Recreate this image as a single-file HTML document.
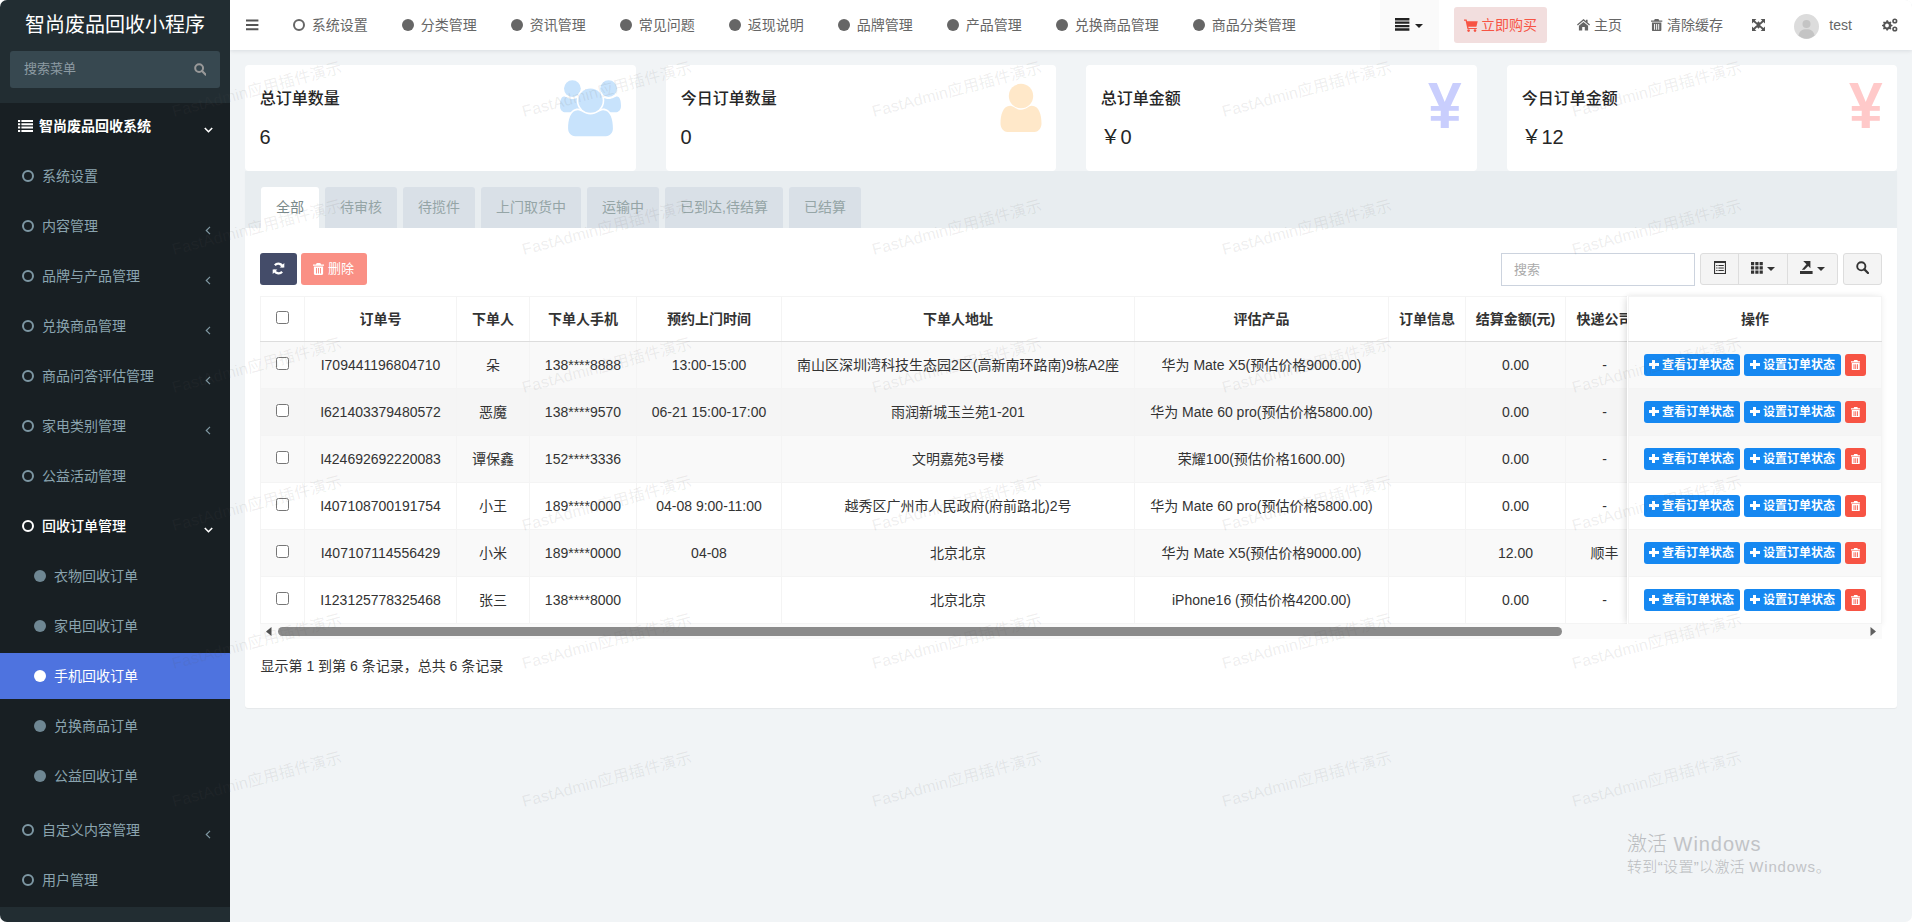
<!DOCTYPE html>
<html lang="zh-CN">
<head>
<meta charset="utf-8">
<title>智尚废品回收小程序</title>
<style>
*{box-sizing:border-box}
html,body{margin:0;padding:0;background:#fff}
body{width:1912px;height:922px;overflow:hidden;font-family:"Liberation Sans","Noto Sans CJK SC",sans-serif;font-size:14px;color:#333;line-height:20px}
a{text-decoration:none;color:inherit}
ul{list-style:none;margin:0;padding:0}
#wrap{position:absolute;left:0;top:0;width:1912px;height:922px;overflow:hidden;background:#f1f4f6;border-radius:7px}
.abs{position:absolute}
/* ---------- sidebar ---------- */
#side{position:absolute;left:0;top:0;width:230px;height:922px;background:#222d32}
#logo{position:absolute;left:0;top:0;width:230px;height:50px;line-height:50px;text-align:center;color:#fff;font-size:20px;font-weight:400}
#sform{position:absolute;left:10px;top:51px;width:210px;height:37px;background:#374850;border-radius:3px}
#sform span{position:absolute;left:14px;top:0;line-height:36px;font-size:13px;color:#8d9ba3}
#sform svg{position:absolute;left:183.500px;top:11.800px}
#menu{position:absolute;left:0;top:103px;width:230px;height:804px;background:#181f23}
#menu a{position:absolute;left:0;width:230px;height:46px;line-height:46px;color:#8aa4af;font-size:14px;white-space:nowrap}
#menu a.on{color:#fff}
#menu a.cur{background:#4e73df;color:#fff}
#menu a.top{font-weight:bold;color:#fff}
#menu i.o{position:absolute;left:22px;top:17px;width:12px;height:12px;border:2px solid #7d97a3;border-radius:50%}
#menu a.on i.o{border-color:#fff}
#menu i.d{position:absolute;left:34px;top:17px;width:12px;height:12px;background:#6f8793;border-radius:50%}
#menu a.cur i.d{background:#fff}
#menu a b{position:absolute;left:42px;top:0;font-weight:normal}
#menu a.l3 b{left:54px}
#menu a.top b{left:39px;font-weight:bold}
#menu a.on b{font-weight:500}
#menu svg.ch{position:absolute;left:204px;top:24px}
/* ---------- header ---------- */
#head{position:absolute;left:230px;top:0;width:1682px;height:50px;background:#fff;box-shadow:0 1px 4px rgba(0,21,41,.10)}
#head .nv{position:absolute;top:0;height:50px;line-height:50px;color:#666;font-size:14px;white-space:nowrap}
#head .nv i{position:absolute;left:0;top:19px;width:12px;height:12px;border-radius:50%;background:#666}
#head .nv i.o{background:none;border:2px solid #666}
#head .nv span{position:absolute;left:18.800px;top:0}
#head .rt{position:absolute;top:0;height:50px;line-height:50px;color:#666;font-size:14px;white-space:nowrap}
/* ---------- cards ---------- */
.card{position:absolute;top:65px;width:391px;height:106px;background:#fff;border-radius:4px}
.card h4{position:absolute;left:14.7px;top:23px;margin:0;font-size:16px;line-height:22px;font-weight:500;color:#262626;font-family:"Liberation Sans","Noto Sans CJK SC",sans-serif}
.card em{position:absolute;left:14.500px;top:58px;font-style:normal;font-size:20px;line-height:28px;color:#262626}
.card svg{position:absolute}
/* ---------- panel ---------- */
#panel{position:absolute;left:245px;top:171px;width:1652px;height:537px;background:#fff;border-radius:0 0 3px 3px;box-shadow:0 1px 1px rgba(0,0,0,.05)}
#tabs{position:absolute;left:0;top:0;width:1652px;height:57px;background:#e8edf0}
#tabs a{position:absolute;top:16px;height:41px;line-height:41px;text-align:center;background:#d9e0e7;color:#95a5a6;font-size:14px;border-radius:3px 3px 0 0}
#tabs a.on{background:#fff;color:#7b8a8b}
.btn{position:absolute;border-radius:3px}
/* ---------- table ---------- */
#tw{position:absolute;left:15px;top:125px;width:1622px;height:328px;overflow:hidden}
table{border-collapse:collapse;table-layout:fixed;font-size:14px}
th,td{border:1px solid #f4f4f4;text-align:center;padding:0;white-space:nowrap;overflow:hidden;color:#333}
th{height:45px;font-weight:bold;border-bottom:1px solid #ddd;background:#fff;color:#333}
td{height:47px}
tbody tr:nth-child(odd) td{background:#f9f9f9}
tbody tr:nth-child(even) td{background:#fff}
tbody tr.hv td{background:#f5f5f5}
.cb{display:inline-block;width:13px;height:13px;border:1px solid #767676;border-radius:2.5px;background:#fff;vertical-align:middle;position:relative;top:-3px}
#fx{position:absolute;left:1382px;top:125px;width:255px;height:328.5px;background:#fff;box-shadow:-4px 0 8px -3px rgba(0,0,0,.11),0 0 6px rgba(0,0,0,.07)}
#fx table{width:254px;margin-left:1px}
.ob{display:inline-block;width:96px;text-align:left;height:22px;line-height:22px;border-radius:3px;color:#fff;font-size:12px;font-weight:bold;padding:0 0 0 5px;vertical-align:middle;background:#1688f1;margin-right:4px;position:relative;top:-0.5px}
.ob.b2{width:97px;padding-left:6px}
.ob.r{background:#f75444;width:21px;padding:0;margin-right:0;text-align:center}
.ob i{display:inline-block;width:9.5px;height:10px;position:relative;margin-right:3.600px;top:1px}
.ob i:before{content:"";position:absolute;left:0;top:3.5px;width:9.5px;height:3px;background:#fff}
.ob i:after{content:"";position:absolute;left:3.25px;top:0.25px;width:3px;height:9.5px;background:#fff}
/* ---------- watermark ---------- */
#wm{position:absolute;left:0;top:0;width:1912px;height:922px;overflow:hidden;pointer-events:none}
#wm span{position:absolute;font-size:16px;line-height:16px;color:rgba(90,90,90,.10);letter-spacing:.15px;white-space:nowrap;transform-origin:0 13.5px;transform:rotate(-14.8deg)}
#win{position:absolute;left:1627px;top:830.5px;color:#bbbdc0;font-weight:300;white-space:nowrap}
#win div:first-child{font-size:20px;line-height:26px}
#win div:last-child{font-size:15px;line-height:20px;margin-top:0}
</style>
</head>
<body>
<div id="wrap">

<!-- ================= HEADER ================= -->
<div id="head">
  <svg class="abs" style="left:16px;top:19px" width="13" height="12" viewBox="0 0 13 12"><path d="M0 .5h12.4v2H0zM0 4.9h12.4v2H0zM0 9.3h12.4v2H0z" fill="#555"/></svg>
  <a class="nv" style="left:63px;width:80px"><i class="o"></i><span>系统设置</span></a>
  <a class="nv" style="left:172px;width:80px"><i></i><span>分类管理</span></a>
  <a class="nv" style="left:281px;width:80px"><i></i><span>资讯管理</span></a>
  <a class="nv" style="left:390px;width:80px"><i></i><span>常见问题</span></a>
  <a class="nv" style="left:499px;width:80px"><i></i><span>返现说明</span></a>
  <a class="nv" style="left:608px;width:80px"><i></i><span>品牌管理</span></a>
  <a class="nv" style="left:717px;width:80px"><i></i><span>产品管理</span></a>
  <a class="nv" style="left:826px;width:108px"><i></i><span>兑换商品管理</span></a>
  <a class="nv" style="left:963px;width:108px"><i></i><span>商品分类管理</span></a>

  <div class="abs" style="left:1150px;top:0;width:59px;height:50px;background:#fafafa"></div>
  <svg class="abs" style="left:1164.6px;top:18.2px" width="15" height="13" viewBox="0 0 15 13"><path d="M0 0h14.4v2.4H0zM0 3.45h14.4v2.4H0zM0 6.9h14.4v2.4H0zM0 10.35h14.4v2.4H0z" fill="#222"/></svg>
  <svg class="abs" style="left:1185px;top:23.5px" width="8" height="4" viewBox="0 0 8 4"><path d="M0 0h8L4 4z" fill="#222"/></svg>

  <div class="abs" style="left:1224px;top:7px;width:93px;height:36px;background:#f2dede;border-radius:3px"></div>
  <svg class="abs" style="left:1233.5px;top:18.5px" width="14" height="13" viewBox="0 0 14 13"><path d="M0 .6h2.6l.5 1.6h10.6l-1.3 5.6H4.3l.3 1.1h8.2v1.1H3.4L1.6 1.7H0z" fill="#f75444"/><circle cx="4.6" cy="11.6" r="1.3" fill="#f75444"/><circle cx="11" cy="11.6" r="1.3" fill="#f75444"/></svg>
  <span class="rt" style="left:1251px;color:#f75444">立即购买</span>

  <svg class="abs" style="left:1347px;top:19px" width="13" height="12" viewBox="0 0 13 12"><path d="M6.5 0L0 5.6l.8.9 5.7-4.8 5.7 4.8.8-.9L10.6 3.500V.8H9v1.300z" fill="#666"/><path d="M6.500 2.900L1.900 6.800V11.500h3.300V8h2.600v3.500h3.300V6.800z" fill="#666"/></svg>
  <span class="rt" style="left:1364px">主页</span>

  <svg class="abs" style="left:1421.300px;top:18.800px" width="11.300" height="12.300" viewBox="0 0 11 12"><path d="M3.700 0h3.600l.7 1.400H11v1.400H0V1.400h3zM.9 3.400h9.200v7.400c0 .7-.5 1.200-1.200 1.200H2.100c-.7 0-1.200-.5-1.200-1.200zM3 4.900v5.500h.95V4.900zM5.030 4.900v5.500h.95V4.900zM7.050 4.900v5.500H8V4.900z" fill="#666" fill-rule="evenodd"/></svg>
  <span class="rt" style="left:1437px">清除缓存</span>

  <svg class="abs" style="left:1522px;top:19px" width="13" height="12" viewBox="0 0 13 12"><path d="M0 0h4.400L2.900 1.500l2.200 2.200 1.400-1.400 1.400 1.400L10.100 1.500 8.600 0H13v4.400l-1.500-1.500-2.200 2.200L8 6l1.300 1.300 2.200 1.800L13 7.600V12H8.600l1.500-1.500-2.200-2.200L6.500 9.700 5.100 8.300 2.900 10.500 4.400 12H0V7.600l1.500 1.500 2.200-2.200L5 6 3.700 4.700 1.500 2.900 0 4.400z" fill="#555"/></svg>

  <svg class="abs" style="left:1563.500px;top:13.500px" width="25" height="25" viewBox="0 0 25 25"><circle cx="12.500" cy="12.500" r="12.500" fill="#dcdcdc"/><circle cx="12.500" cy="10" r="4" fill="#c4c4c4"/><path d="M4.500 21.500c.8-4.500 3.500-6.300 8-6.300s7.200 1.800 8 6.300c-2.200 2-5 3.200-8 3.200s-5.800-1.200-8-3.200z" fill="#c4c4c4"/></svg>
  <span class="rt" style="left:1599.3px">test</span>

  <svg class="abs" style="left:1651.500px;top:18px" width="16" height="14" viewBox="0 0 16 14"><g fill="#555"><path d="M5 2.200l1 .1.400 1.300 1 .500 1.200-.6.800.8-.6 1.200.4 1 1.300.4v1.200l-1.300.4-.4 1 .6 1.200-.8.8-1.200-.6-1 .4-.4 1.300H4.400L4 11.300l-1-.4-1.200.6-.8-.8.600-1.200-.4-1L0 8.100V6.900l1.300-.4.400-1-.6-1.200.8-.8 1.200.6 1-.5.400-1.300zM5 5.600a1.900 1.900 0 100 3.800 1.900 1.900 0 000-3.800z" fill-rule="evenodd"/><circle cx="12.800" cy="3" r="2.600"/><circle cx="12.800" cy="11" r="2.600"/></g><circle cx="12.800" cy="3" r="1" fill="#fff"/><circle cx="12.800" cy="11" r="1" fill="#fff"/></svg>
</div>

<!-- ================= SIDEBAR ================= -->
<div id="side">
  <div id="logo">智尚废品回收小程序</div>
  <div id="sform"><span>搜索菜单</span>
    <svg width="12.800" height="12.800" viewBox="0 0 14 14"><circle cx="5.600" cy="5.600" r="4.300" fill="none" stroke="#999" stroke-width="2.200"/><path d="M8.800 8.800l4 4" stroke="#999" stroke-width="2.300" stroke-linecap="round"/></svg>
  </div>
  <div id="menu">
    <a class="top" style="top:0">
      <svg class="abs" style="left:18px;top:17px" width="15" height="12" viewBox="0 0 15 12"><path d="M0 0h2.200v2H0zM3.400 0H15v2H3.400zM0 3.300h2.200v2H0zM3.400 3.300H15v2H3.400zM0 6.600h2.200v2H0zM3.400 6.600H15v2H3.400zM0 9.900h2.200v2H0zM3.400 9.900H15v2H3.400z" fill="#fff"/></svg>
      <b>智尚废品回收系统</b>
      <svg class="ch" width="9" height="6" viewBox="0 0 9 6"><path d="M.8 1l3.700 3.700L8.200 1" fill="none" stroke="#fff" stroke-width="1.600"/></svg>
    </a>
    <a style="top:50px"><i class="o"></i><b>系统设置</b></a>
    <a style="top:100px"><i class="o"></i><b>内容管理</b><svg class="ch" style="left:205px;top:23px" width="6" height="9" viewBox="0 0 6 9"><path d="M5 .8L1.300 4.500 5 8.200" fill="none" stroke="#7f98a3" stroke-width="1.200"/></svg></a>
    <a style="top:150px"><i class="o"></i><b>品牌与产品管理</b><svg class="ch" style="left:205px;top:23px" width="6" height="9" viewBox="0 0 6 9"><path d="M5 .8L1.300 4.500 5 8.200" fill="none" stroke="#7f98a3" stroke-width="1.200"/></svg></a>
    <a style="top:200px"><i class="o"></i><b>兑换商品管理</b><svg class="ch" style="left:205px;top:23px" width="6" height="9" viewBox="0 0 6 9"><path d="M5 .8L1.300 4.500 5 8.200" fill="none" stroke="#7f98a3" stroke-width="1.200"/></svg></a>
    <a style="top:250px"><i class="o"></i><b>商品问答评估管理</b><svg class="ch" style="left:205px;top:23px" width="6" height="9" viewBox="0 0 6 9"><path d="M5 .8L1.300 4.500 5 8.200" fill="none" stroke="#7f98a3" stroke-width="1.200"/></svg></a>
    <a style="top:300px"><i class="o"></i><b>家电类别管理</b><svg class="ch" style="left:205px;top:23px" width="6" height="9" viewBox="0 0 6 9"><path d="M5 .8L1.300 4.500 5 8.200" fill="none" stroke="#7f98a3" stroke-width="1.200"/></svg></a>
    <a style="top:350px"><i class="o"></i><b>公益活动管理</b></a>
    <a class="on" style="top:400px"><i class="o"></i><b>回收订单管理</b><svg class="ch" width="9" height="6" viewBox="0 0 9 6"><path d="M.8 1l3.700 3.700L8.200 1" fill="none" stroke="#fff" stroke-width="1.600"/></svg></a>
    <a class="l3" style="top:450px"><i class="d"></i><b>衣物回收订单</b></a>
    <a class="l3" style="top:500px"><i class="d"></i><b>家电回收订单</b></a>
    <a class="l3 cur" style="top:550px"><i class="d"></i><b>手机回收订单</b></a>
    <a class="l3" style="top:600px"><i class="d"></i><b>兑换商品订单</b></a>
    <a class="l3" style="top:650px"><i class="d"></i><b>公益回收订单</b></a>
    <a style="top:704px"><i class="o"></i><b>自定义内容管理</b><svg class="ch" style="left:205px;top:23px" width="6" height="9" viewBox="0 0 6 9"><path d="M5 .8L1.300 4.500 5 8.200" fill="none" stroke="#7f98a3" stroke-width="1.200"/></svg></a>
    <a style="top:754px"><i class="o"></i><b>用户管理</b></a>
  </div>
</div>

<!-- ================= CARDS ================= -->
<div class="card" style="left:245px"><h4>总订单数量</h4><em>6</em>
  <svg style="left:315px;top:14.600px" width="62" height="57" viewBox="0 0 62 57">
    <g fill="#c8e3fc">
      <circle cx="12.400" cy="8.600" r="8.400"/><circle cx="48.600" cy="8.600" r="8.400"/>
      <path d="M0 26c0-5 1-9.500 4-9.500 2 0 4 2.500 8.400 2.500s6.400-2.500 8.400-2.500c1.500 0 2.500 1 3.200 2.500V32.300H5.500C2.500 32.300 0 30 0 26z"/>
      <path d="M61 26c0-5-1-9.500-4-9.500-2 0-4 2.500-8.400 2.500s-6.400-2.500-8.400-2.500c-1.500 0-2.500 1-3.200 2.500V32.300h18.500c3 0 5.500-2.300 5.500-6.300z"/>
    </g>
    <circle cx="30.500" cy="20.600" r="13.800" fill="#fff"/>
    <path d="M6.600 49c0-10 3-20.500 11.500-20.500 3.500 0 6 4.300 12.400 4.300s8.900-4.300 12.400-4.300C51.400 28.500 54.400 39 54.400 49c0 4.500-3 8.500-7.900 8.500h-32C9.600 57.500 6.600 53.500 6.600 49z" fill="#fff"/>
    <circle cx="30.500" cy="20.600" r="12.200" fill="#c8e3fc"/>
    <path d="M8.100 48.500c0-9 2.500-18.200 9.800-18.200 3.400 0 6.200 4.100 12.600 4.100s9.200-4.100 12.600-4.100c7.300 0 9.800 9.200 9.800 18.200 0 4-2.800 7.700-7 7.700H15.100c-4.200 0-7-3.700-7-7.700z" fill="#c8e3fc"/>
  </svg>
</div>
<div class="card" style="left:666px;width:390px"><h4>今日订单数量</h4><em>0</em>
  <svg style="left:334px;top:18px" width="42" height="50" viewBox="0 0 42 50">
    <circle cx="21" cy="13" r="12.200" fill="#ffe8c9"/>
    <path d="M.5 40.500C.5 32 3 22.800 10.200 22.800c3.200 0 5.400 3.900 10.800 3.900s7.600-3.900 10.800-3.900C39 22.800 41.500 32 41.500 40.500c0 4.200-2.700 8.400-7 8.400h-27c-4.300 0-7-4.200-7-8.400z" fill="#ffe8c9"/>
  </svg>
</div>
<div class="card" style="left:1086px"><h4>总订单金额</h4><em>￥0</em>
  <span class="abs" style="left:342.200px;top:9.300px;font-size:64.300px;line-height:64.300px;transform:scaleX(.94);transform-origin:0 0;font-weight:bold;color:#c9cefd;font-family:'Liberation Sans',sans-serif">¥</span>
</div>
<div class="card" style="left:1507px;width:390px"><h4>今日订单金额</h4><em>￥12</em>
  <span class="abs" style="left:342.200px;top:9.300px;font-size:64.300px;line-height:64.300px;transform:scaleX(.94);transform-origin:0 0;font-weight:bold;color:#ffc9c9;font-family:'Liberation Sans',sans-serif">¥</span>
</div>

<!-- ================= PANEL ================= -->
<div id="panel">
  <div id="tabs">
    <a class="on" style="left:16px;width:58px">全部</a>
    <a style="left:80px;width:72px">待审核</a>
    <a style="left:158px;width:72px">待揽件</a>
    <a style="left:236px;width:100px">上门取货中</a>
    <a style="left:342px;width:72px">运输中</a>
    <a style="left:420px;width:118px">已到达,待结算</a>
    <a style="left:544px;width:72px">已结算</a>
  </div>

  <!-- toolbar -->
  <div class="btn" style="left:15px;top:82px;width:37px;height:32px;background:#444c69"></div>
  <svg class="abs" style="left:27px;top:90.500px" width="13" height="13" viewBox="0 0 13 13"><path d="M10.900 5.200A4.600 4.600 0 002.900 3.300M2.100 7.800a4.600 4.600 0 008 1.900" fill="none" stroke="#fff" stroke-width="2.300"/><path d="M12.300 .9v4.700H7.600zM.7 12.100V7.400h4.700z" fill="#fff"/></svg>
  <div class="btn" style="left:56px;top:82px;width:66px;height:32px;background:#fa9085"></div>
  <svg class="abs" style="left:68.300px;top:91.700px" width="11" height="12" viewBox="0 0 11 12"><path d="M3.700 0h3.600l.7 1.400H11v1.400H0V1.400h3zM.9 3.400h9.200v7.400c0 .7-.5 1.200-1.200 1.200H2.100c-.7 0-1.200-.5-1.200-1.200zM3 4.900v5.500h.95V4.900zM5.030 4.900v5.500h.95V4.900zM7.050 4.900v5.500H8V4.900z" fill="#fff" fill-rule="evenodd"/></svg>
  <span class="abs" style="left:83px;top:82px;line-height:31px;font-size:13px;color:#fff">删除</span>

  <div class="abs" style="left:1256px;top:82px;width:194px;height:33px;border:1px solid #ccd3de;background:#fff;border-radius:0"></div>
  <span class="abs" style="left:1269px;top:82px;line-height:33px;font-size:13px;color:#aaa">搜索</span>

  <div class="btn" style="left:1455px;top:82px;width:138px;height:32px;background:#f4f4f4;border:1px solid #ddd"></div>
  <div class="abs" style="left:1493px;top:82px;width:1px;height:32px;background:#ddd"></div>
  <div class="abs" style="left:1542px;top:82px;width:1px;height:32px;background:#ddd"></div>
  <svg class="abs" style="left:1468.500px;top:89.500px" width="12" height="13" viewBox="0 0 12 13"><path d="M.5 1h11v11.500H.5z" fill="none" stroke="#333" stroke-width="1.200"/><path d="M0 0h12v2H0z" fill="#333"/><g transform="translate(0,1.300)"><path d="M2.200 2.800h1.300v1H2.200zM4.400 2.800h5.400v1H4.400zM2.200 5.200h1.300v1H2.200zM4.400 5.200h5.400v1H4.400zM2.200 7.600h1.300v1H2.200zM4.400 7.600h5.400v1H4.400z" fill="#333"/></g></svg>
  <svg class="abs" style="left:1506px;top:91px" width="12" height="12" viewBox="0 0 12 12"><path d="M0 0h3.200v3.200H0zM4.300 0h3.200v3.200H4.300zM8.600 0h3.200v3.200H8.600zM0 4.300h3.200v3.200H0zM4.300 4.300h3.200v3.200H4.300zM8.600 4.300h3.200v3.200H8.600zM0 8.600h3.200v3.200H0zM4.300 8.600h3.200v3.200H4.300zM8.600 8.600h3.200v3.200H8.600z" fill="#333"/></svg>
  <svg class="abs" style="left:1521.500px;top:96px" width="8" height="4" viewBox="0 0 8 4"><path d="M0 0h8L4 4z" fill="#333"/></svg>
  <svg class="abs" style="left:1555px;top:90px" width="13" height="13" viewBox="0 0 13 13"><path d="M0 10h12.600v3H0z" fill="#333"/><path d="M3.200 0h7.200v7.200L8.200 5 4.500 8.700 1.800 8.700 6.500 3.300z" fill="#333"/></svg>
  <svg class="abs" style="left:1571.500px;top:96px" width="8" height="4" viewBox="0 0 8 4"><path d="M0 0h8L4 4z" fill="#333"/></svg>

  <div class="btn" style="left:1598px;top:82px;width:39px;height:32px;background:#f4f4f4;border:1px solid #ddd"></div>
  <svg class="abs" style="left:1611px;top:90px" width="13" height="13" viewBox="0 0 13 13"><circle cx="5.300" cy="5.300" r="4.100" fill="none" stroke="#333" stroke-width="1.900"/><path d="M8.400 8.400l3.600 3.600" stroke="#333" stroke-width="2.200" stroke-linecap="round"/></svg>

  <!-- table -->
  <div id="tw">
  <table style="width:2003px">
    <colgroup><col style="width:44px"><col style="width:152px"><col style="width:73px"><col style="width:107px"><col style="width:145px"><col style="width:353px"><col style="width:254px"><col style="width:77px"><col style="width:100px"><col style="width:78px"><col style="width:159px"><col style="width:207px"><col style="width:254px"></colgroup>
    <thead><tr><th><i class="cb"></i></th><th>订单号</th><th>下单人</th><th>下单人手机</th><th>预约上门时间</th><th>下单人地址</th><th>评估产品</th><th>订单信息</th><th>结算金额(元)</th><th>快递公司</th><th>快递单号</th><th>下单时间</th><th>操作</th></tr></thead>
    <tbody>
      <tr><td><i class="cb"></i></td><td>I709441196804710</td><td>朵</td><td>138****8888</td><td>13:00-15:00</td><td>南山区深圳湾科技生态园2区(高新南环路南)9栋A2座</td><td>华为 Mate X5(预估价格9000.00)</td><td></td><td>0.00</td><td>-</td><td>-</td><td></td><td></td></tr>
      <tr class="hv"><td><i class="cb"></i></td><td>I621403379480572</td><td>恶魔</td><td>138****9570</td><td>06-21 15:00-17:00</td><td>雨润新城玉兰苑1-201</td><td>华为 Mate 60 pro(预估价格5800.00)</td><td></td><td>0.00</td><td>-</td><td>-</td><td></td><td></td></tr>
      <tr><td><i class="cb"></i></td><td>I424692692220083</td><td>谭保鑫</td><td>152****3336</td><td></td><td>文明嘉苑3号楼</td><td>荣耀100(预估价格1600.00)</td><td></td><td>0.00</td><td>-</td><td>-</td><td></td><td></td></tr>
      <tr><td><i class="cb"></i></td><td>I407108700191754</td><td>小王</td><td>189****0000</td><td>04-08 9:00-11:00</td><td>越秀区广州市人民政府(府前路北)2号</td><td>华为 Mate 60 pro(预估价格5800.00)</td><td></td><td>0.00</td><td>-</td><td>-</td><td></td><td></td></tr>
      <tr><td><i class="cb"></i></td><td>I407107114556429</td><td>小米</td><td>189****0000</td><td>04-08</td><td>北京北京</td><td>华为 Mate X5(预估价格9000.00)</td><td></td><td>12.00</td><td>顺丰</td><td>-</td><td></td><td></td></tr>
      <tr><td><i class="cb"></i></td><td>I123125778325468</td><td>张三</td><td>138****8000</td><td></td><td>北京北京</td><td>iPhone16 (预估价格4200.00)</td><td></td><td>0.00</td><td>-</td><td>-</td><td></td><td></td></tr>
    </tbody>
  </table>
  </div>
  <!-- fixed right column -->
  <div id="fx">
  <table>
    <thead><tr><th>操作</th></tr></thead>
    <tbody>
      <tr><td><a class="ob"><i></i>查看订单状态</a><a class="ob b2"><i></i>设置订单状态</a><a class="ob r"><svg width="9.500" height="10.500" viewBox="0 0 11 12" style="position:relative;top:1.500px"><path d="M3.700 0h3.600l.7 1.400H11v1.400H0V1.400h3zM.9 3.400h9.200v7.400c0 .7-.5 1.200-1.200 1.200H2.100c-.7 0-1.200-.5-1.200-1.200zM3 4.900v5.500h.95V4.900zM5.030 4.900v5.500h.95V4.900zM7.050 4.900v5.500H8V4.900z" fill="#fff" fill-rule="evenodd"/></svg></a></td></tr>
      <tr class="hv"><td><a class="ob"><i></i>查看订单状态</a><a class="ob b2"><i></i>设置订单状态</a><a class="ob r"><svg width="9.500" height="10.500" viewBox="0 0 11 12" style="position:relative;top:1.500px"><path d="M3.700 0h3.600l.7 1.400H11v1.400H0V1.400h3zM.9 3.400h9.200v7.400c0 .7-.5 1.200-1.200 1.200H2.100c-.7 0-1.200-.5-1.200-1.200zM3 4.900v5.500h.95V4.900zM5.030 4.900v5.500h.95V4.900zM7.050 4.900v5.500H8V4.900z" fill="#fff" fill-rule="evenodd"/></svg></a></td></tr>
      <tr><td><a class="ob"><i></i>查看订单状态</a><a class="ob b2"><i></i>设置订单状态</a><a class="ob r"><svg width="9.500" height="10.500" viewBox="0 0 11 12" style="position:relative;top:1.500px"><path d="M3.700 0h3.600l.7 1.400H11v1.400H0V1.400h3zM.9 3.400h9.200v7.400c0 .7-.5 1.200-1.200 1.200H2.100c-.7 0-1.200-.5-1.200-1.200zM3 4.900v5.500h.95V4.900zM5.030 4.900v5.500h.95V4.900zM7.050 4.900v5.500H8V4.900z" fill="#fff" fill-rule="evenodd"/></svg></a></td></tr>
      <tr><td><a class="ob"><i></i>查看订单状态</a><a class="ob b2"><i></i>设置订单状态</a><a class="ob r"><svg width="9.500" height="10.500" viewBox="0 0 11 12" style="position:relative;top:1.500px"><path d="M3.700 0h3.600l.7 1.400H11v1.400H0V1.400h3zM.9 3.400h9.200v7.400c0 .7-.5 1.200-1.200 1.200H2.100c-.7 0-1.200-.5-1.200-1.200zM3 4.900v5.500h.95V4.900zM5.030 4.900v5.500h.95V4.900zM7.050 4.900v5.500H8V4.900z" fill="#fff" fill-rule="evenodd"/></svg></a></td></tr>
      <tr><td><a class="ob"><i></i>查看订单状态</a><a class="ob b2"><i></i>设置订单状态</a><a class="ob r"><svg width="9.500" height="10.500" viewBox="0 0 11 12" style="position:relative;top:1.500px"><path d="M3.700 0h3.600l.7 1.400H11v1.400H0V1.400h3zM.9 3.400h9.200v7.400c0 .7-.5 1.200-1.200 1.200H2.100c-.7 0-1.200-.5-1.200-1.200zM3 4.900v5.500h.95V4.900zM5.030 4.900v5.500h.95V4.900zM7.050 4.900v5.500H8V4.900z" fill="#fff" fill-rule="evenodd"/></svg></a></td></tr>
      <tr><td><a class="ob"><i></i>查看订单状态</a><a class="ob b2"><i></i>设置订单状态</a><a class="ob r"><svg width="9.500" height="10.500" viewBox="0 0 11 12" style="position:relative;top:1.500px"><path d="M3.700 0h3.600l.7 1.400H11v1.400H0V1.400h3zM.9 3.400h9.200v7.400c0 .7-.5 1.200-1.200 1.200H2.100c-.7 0-1.200-.5-1.200-1.200zM3 4.900v5.500h.95V4.900zM5.030 4.900v5.500h.95V4.900zM7.050 4.900v5.500H8V4.900z" fill="#fff" fill-rule="evenodd"/></svg></a></td></tr>
    </tbody>
  </table>
  </div>

  <!-- scrollbar -->
  <div class="abs" style="left:15px;top:453px;width:1622px;height:15px;background:#fafafa"></div>
  <svg class="abs" style="left:20.500px;top:456px" width="6" height="9" viewBox="0 0 6 9"><path d="M5.500 0v9L0 4.500z" fill="#505050"/></svg>
  <svg class="abs" style="left:1624.800px;top:456px" width="6" height="9" viewBox="0 0 6 9"><path d="M.5 0v9L6 4.500z" fill="#606060"/></svg>
  <div class="abs" style="left:32.500px;top:456px;width:1284.500px;height:9px;background:#8b8b8b;border-radius:4.500px"></div>

  <div class="abs" style="left:15.500px;top:485px;font-size:14px;line-height:20px;color:#333;white-space:nowrap">显示第 1 到第 6 条记录，总共 6 条记录</div>
</div>

<!-- ================= WATERMARK ================= -->
<div id="wm">
<span style="left:173.6px;top:104.2px">FastAdmin应用插件演示</span>
<span style="left:523.6px;top:104.2px">FastAdmin应用插件演示</span>
<span style="left:873.6px;top:104.2px">FastAdmin应用插件演示</span>
<span style="left:1223.6px;top:104.2px">FastAdmin应用插件演示</span>
<span style="left:1573.6px;top:104.2px">FastAdmin应用插件演示</span>
<span style="left:173.6px;top:242.2px">FastAdmin应用插件演示</span>
<span style="left:523.6px;top:242.2px">FastAdmin应用插件演示</span>
<span style="left:873.6px;top:242.2px">FastAdmin应用插件演示</span>
<span style="left:1223.6px;top:242.2px">FastAdmin应用插件演示</span>
<span style="left:1573.6px;top:242.2px">FastAdmin应用插件演示</span>
<span style="left:173.6px;top:380.2px">FastAdmin应用插件演示</span>
<span style="left:523.6px;top:380.2px">FastAdmin应用插件演示</span>
<span style="left:873.6px;top:380.2px">FastAdmin应用插件演示</span>
<span style="left:1223.6px;top:380.2px">FastAdmin应用插件演示</span>
<span style="left:1573.6px;top:380.2px">FastAdmin应用插件演示</span>
<span style="left:173.6px;top:518.2px">FastAdmin应用插件演示</span>
<span style="left:523.6px;top:518.2px">FastAdmin应用插件演示</span>
<span style="left:873.6px;top:518.2px">FastAdmin应用插件演示</span>
<span style="left:1223.6px;top:518.2px">FastAdmin应用插件演示</span>
<span style="left:1573.6px;top:518.2px">FastAdmin应用插件演示</span>
<span style="left:173.6px;top:656.2px">FastAdmin应用插件演示</span>
<span style="left:523.6px;top:656.2px">FastAdmin应用插件演示</span>
<span style="left:873.6px;top:656.2px">FastAdmin应用插件演示</span>
<span style="left:1223.6px;top:656.2px">FastAdmin应用插件演示</span>
<span style="left:1573.6px;top:656.2px">FastAdmin应用插件演示</span>
<span style="left:173.6px;top:794.2px">FastAdmin应用插件演示</span>
<span style="left:523.6px;top:794.2px">FastAdmin应用插件演示</span>
<span style="left:873.6px;top:794.2px">FastAdmin应用插件演示</span>
<span style="left:1223.6px;top:794.2px">FastAdmin应用插件演示</span>
<span style="left:1573.6px;top:794.2px">FastAdmin应用插件演示</span>
</div>
<div id="win"><div>激活 <span style="letter-spacing:.95px;margin-left:1px;color:#c1c3c6">Windows</span></div><div><span style="letter-spacing:.35px">转到“设置”以激活</span> <span style="letter-spacing:.8px;color:#c1c3c6">Windows</span>。</div></div>

</div>
</body>
</html>
